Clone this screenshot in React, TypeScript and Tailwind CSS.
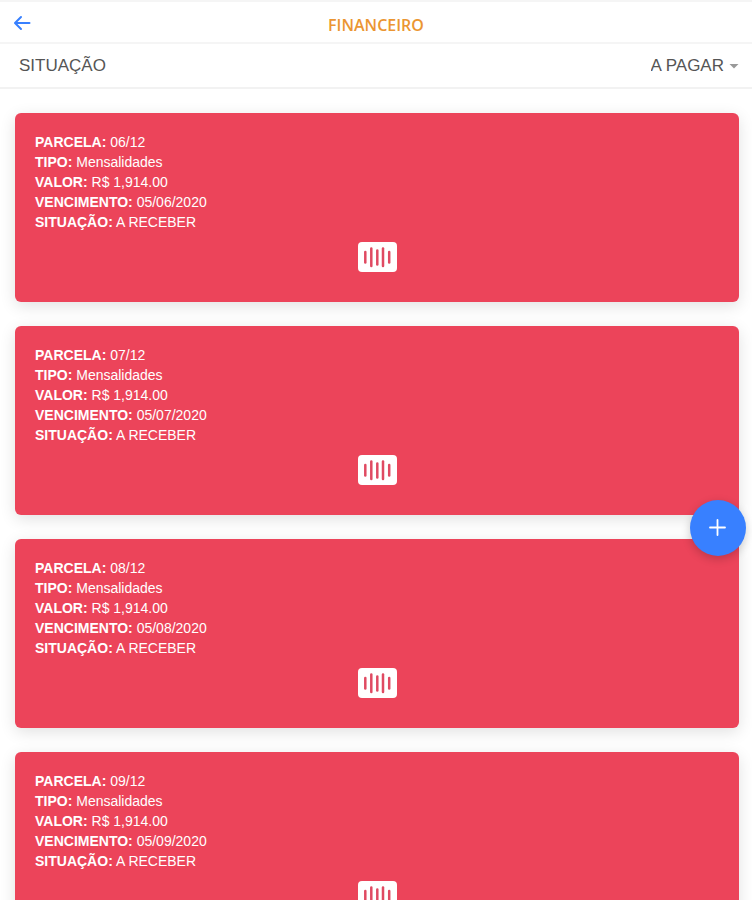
import { useState } from "react";

const parcelas = [
  { numero: "06/12", tipo: "Mensalidades", valor: "R$ 1,914.00", vencimento: "05/06/2020", situacao: "A RECEBER" },
  { numero: "07/12", tipo: "Mensalidades", valor: "R$ 1,914.00", vencimento: "05/07/2020", situacao: "A RECEBER" },
  { numero: "08/12", tipo: "Mensalidades", valor: "R$ 1,914.00", vencimento: "05/08/2020", situacao: "A RECEBER" },
  { numero: "09/12", tipo: "Mensalidades", valor: "R$ 1,914.00", vencimento: "05/09/2020", situacao: "A RECEBER" },
];

type Parcela = (typeof parcelas)[number];

function Linha({ label, children }: { label: string; children: string }) {
  return (
    <p>
      <strong className="font-bold">{label}:</strong> {children}
    </p>
  );
}

function BarcodeIcon() {
  return (
    <svg viewBox="0 0 39 30" className="block h-[30px] w-[39px]" aria-hidden>
      <rect width="39" height="30" rx="4" fill="#fff" />
      <g stroke="#e04a62" strokeWidth="2.5" strokeLinecap="round">
        <path d="M7.3 10v10.5" />
        <path d="M13.3 6.5v17.5" />
        <path d="M19.3 8.5v14" />
        <path d="M25 6.5v17.5" />
        <path d="M31.2 10v10.5" />
      </g>
    </svg>
  );
}

function ParcelaCard({ parcela }: { parcela: Parcela }) {
  return (
    <article className="rounded-md bg-[#ec445a] px-5 pt-[19px] pb-[30px] text-sm leading-5 text-white shadow-[0_4px_16px_rgba(0,0,0,0.12)]">
      <Linha label="PARCELA">{parcela.numero}</Linha>
      <Linha label="TIPO">{parcela.tipo}</Linha>
      <Linha label="VALOR">{parcela.valor}</Linha>
      <Linha label="VENCIMENTO">{parcela.vencimento}</Linha>
      <Linha label="SITUAÇÃO">{parcela.situacao}</Linha>
      <button type="button" aria-label="Código de barras" className="mx-auto mt-[10px] block">
        <BarcodeIcon />
      </button>
    </article>
  );
}

export default function App() {
  const [situacao, setSituacao] = useState("A PAGAR");

  return (
    <div className="relative flex h-screen flex-col overflow-hidden bg-white font-['Liberation_Sans',Arial,sans-serif]">
      <header className="grid shrink-0 grid-cols-[1fr_auto_1fr] items-center border-t-2 border-b-2 border-[#f5f5f5] px-3 pt-[11px] pb-[5px]">
        <button type="button" aria-label="Voltar" className="w-5 text-[#3880ff]">
          <svg viewBox="0 0 20 20" className="h-5 w-5" fill="none" stroke="currentColor" strokeWidth="2" strokeLinecap="round" strokeLinejoin="round" aria-hidden>
            <path d="M9 2 3 8l6 6M3.5 8H17.5" />
          </svg>
        </button>
        <h1 className="font-['Open_Sans','Noto_Sans',sans-serif] text-base leading-6 font-semibold text-[#eb9632]">
          FINANCEIRO
        </h1>
      </header>

      <div className="flex shrink-0 items-center justify-between border-b-2 border-[#f2f2f2] pt-[10px] pr-3 pb-[9px] pl-[19px] text-[17px] leading-6 text-[#555]">
        <label htmlFor="situacao">SITUAÇÃO</label>
        <div className="flex items-center gap-1">
          <select
            id="situacao"
            value={situacao}
            onChange={(e) => setSituacao(e.target.value)}
            className="appearance-none bg-transparent outline-none [field-sizing:content]"
          >
            <option>A PAGAR</option>
            <option>PAGO</option>
          </select>
          <svg viewBox="0 0 12 12" className="pointer-events-none h-3 w-3" fill="#999" aria-hidden>
            <path d="M1.5 4h9L6 8.5z" />
          </svg>
        </div>
      </div>

      <main className="flex min-h-0 flex-1 flex-col gap-6 overflow-y-auto pt-6 pr-[13px] pb-6 pl-[15px] [scrollbar-width:none]">
        {parcelas.map((p) => (
          <ParcelaCard key={p.numero} parcela={p} />
        ))}
      </main>

      <button
        type="button"
        aria-label="Adicionar"
        className="absolute top-1/2 right-[6px] mt-[50px] flex h-14 w-14 items-center justify-center rounded-full bg-[#3880ff] text-white shadow-[0_3px_10px_rgba(0,0,0,0.2)]"
      >
        <svg viewBox="0 0 18 18" className="h-[18px] w-[18px]" fill="none" stroke="currentColor" strokeWidth="1.8" strokeLinecap="round" aria-hidden>
          <path d="M8.5 1v15M1 8.5h15" />
        </svg>
      </button>
    </div>
  );
}
